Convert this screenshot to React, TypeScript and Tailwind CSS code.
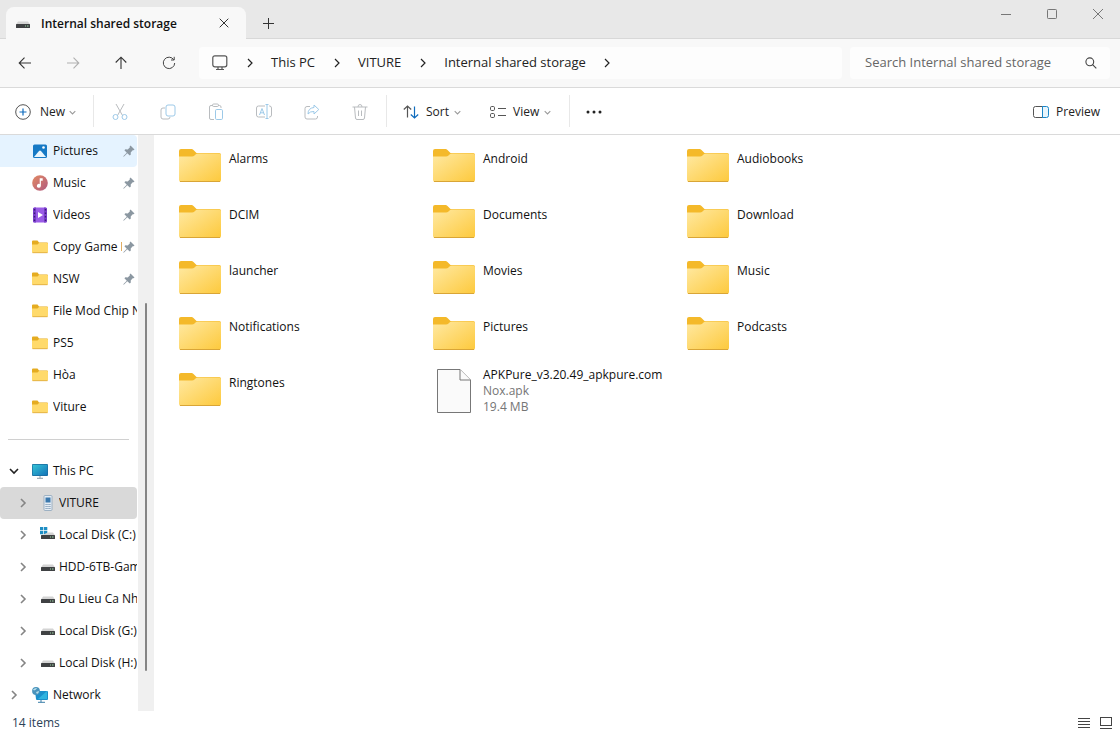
import React from 'react';

type IconName = 'pictures' | 'music' | 'videos' | 'folder' | 'pc' | 'phone' | 'system' | 'drive' | 'network';

interface NavItem {
    label: string;
    icon: IconName;
    pinned?: boolean;
    state?: 'hover' | 'selected';
}

const quickAccess: NavItem[] = [
    { label: 'Pictures', icon: 'pictures', pinned: true, state: 'hover' },
    { label: 'Music', icon: 'music', pinned: true },
    { label: 'Videos', icon: 'videos', pinned: true },
    { label: 'Copy Game N', icon: 'folder', pinned: true },
    { label: 'NSW', icon: 'folder', pinned: true },
    { label: 'File Mod Chip N', icon: 'folder' },
    { label: 'PS5', icon: 'folder' },
    { label: 'Hòa', icon: 'folder' },
    { label: 'Viture', icon: 'folder' },
];

const drives: NavItem[] = [
    { label: 'VITURE', icon: 'phone', state: 'selected' },
    { label: 'Local Disk (C:)', icon: 'system' },
    { label: 'HDD-6TB-Gam', icon: 'drive' },
    { label: 'Du Lieu Ca Nh', icon: 'drive' },
    { label: 'Local Disk (G:)', icon: 'drive' },
    { label: 'Local Disk (H:)', icon: 'drive' },
];

const folders = [
    'Alarms', 'Android', 'Audiobooks',
    'DCIM', 'Documents', 'Download',
    'launcher', 'Movies', 'Music',
    'Notifications', 'Pictures', 'Podcasts',
    'Ringtones',
];

const crumbs = ['This PC', 'VITURE', 'Internal shared storage'];

const Chevron: React.FC<{ className?: string; down?: boolean; size?: number; width?: number }> = ({ className, down, size = 10, width = 1.2 }) => (
    <svg width={size} height={size} viewBox="0 0 10 10" fill="none" stroke="currentColor" strokeWidth={width} className={className}>
        <path d={down ? 'M1 3l4 4 4-4' : 'M3 1l4 4-4 4'} />
    </svg>
);

const DriveIcon = () => (
    <svg width="16" height="16" viewBox="0 0 16 16">
        <path d="M3 5.500h10l2 3H1z" fill="#d4d4d4" />
        <rect x="1" y="8" width="14" height="4" rx=".5" fill="#3f4143" />
        <path d="M10 10h1M12 10h1.500" stroke="#9ad6a4" />
    </svg>
);

const SmallIcon: React.FC<{ name: IconName }> = ({ name }) => {
    switch (name) {
        case 'pictures':
            return (
                <svg width="16" height="16" viewBox="0 0 16 16">
                    <rect x="1" y="1.500" width="14" height="13.500" rx="1.500" fill="#1679c5" />
                    <path d="M2 14l5-6q1-1 2 0l5 6z" fill="#eaf6fd" />
                    <circle cx="11.500" cy="4.500" r="1.300" fill="#fff" />
                </svg>
            );
        case 'music':
            return (
                <svg width="16" height="16" viewBox="0 0 16 16">
                    <defs>
                        <linearGradient id="music" x1="0" y1="0" x2="1" y2="1">
                            <stop offset="0" stopColor="#e38a63" />
                            <stop offset="1" stopColor="#b05a80" />
                        </linearGradient>
                    </defs>
                    <circle cx="8" cy="8" r="7.800" fill="url(#music)" />
                    <path d="M7.700 3.300h3v2.400H8.900v5.100a2 2 0 1 1-1.200-1.900z" fill="#fff" />
                </svg>
            );
        case 'videos':
            return (
                <svg width="16" height="16" viewBox="0 0 16 16">
                    <rect x="1" y=".5" width="14" height="15" rx="1.500" fill="#9a5ce6" />
                    <path d="M1 2a1.500 1.500 0 0 1 1.500-1.500H4v15H2.500A1.500 1.500 0 0 1 1 14zM12 .5h1.500A1.500 1.500 0 0 1 15 2v12a1.500 1.500 0 0 1-1.500 1.500H12z" fill="#7a3fcb" />
                    <path d="M2.500 2v12M13.500 2v12" stroke="#3d1a78" strokeWidth="1.400" strokeDasharray="1.500 2" />
                    <path d="M6 5l5 3-5 3z" fill="#fff" />
                </svg>
            );
        case 'folder':
            return (
                <svg width="16" height="16" viewBox="0 0 16 16">
                    <path d="M0 2.500q0-1 1-1h4.500l1.500 2h8q1 0 1 1V7H0z" fill="#e5ac21" />
                    <path d="M0 5.500h5.500l1.500-1.500h8q1 0 1 1V13q0 1-1 1H1q-1 0-1-1z" fill="#ffda6b" />
                    <path d="M.5 13.700h15" stroke="#dca73c" strokeWidth=".8" />
                </svg>
            );
        case 'pc':
            return (
                <svg width="16" height="16" viewBox="0 0 16 16">
                    <defs>
                        <linearGradient id="screen" x1="0" y1="0" x2="1" y2="1">
                            <stop offset="0" stopColor="#35c4d6" />
                            <stop offset="1" stopColor="#1473b8" />
                        </linearGradient>
                    </defs>
                    <rect x="0" y="1" width="16" height="12" rx="1" fill="#1a6c9e" />
                    <rect x=".7" y="1.700" width="14.600" height="10.600" rx=".5" fill="url(#screen)" />
                    <path d="M8 13v2M5 15.300h6" stroke="#8c9aa5" />
                </svg>
            );
        case 'phone':
            return (
                <svg width="16" height="16" viewBox="0 0 16 16">
                    <rect x="4" y=".5" width="8" height="15" rx="1" fill="#e4ecf4" stroke="#8da5ba" strokeWidth=".8" />
                    <rect x="5.500" y="2.500" width="5" height="5" fill="#3a78ad" />
                    <path d="M5.500 9.500h5M5.500 11.500h5M5.500 13.500h5" stroke="#7795b0" strokeDasharray="1.200 .7" />
                </svg>
            );
        case 'system':
            return (
                <svg width="16" height="16" viewBox="0 0 16 16">
                    <path d="M0 0h3.300v3.300H0zM4 0h3.300v3.300H4zM0 4h3.300v3.300H0zM4 4h3.300v3.300H4z" fill="#1f8ec4" />
                    <path d="M8 5.500h5l2 3H1z" fill="#d4d4d4" />
                    <rect x="1" y="8" width="14" height="4" rx=".5" fill="#3f4143" />
                    <path d="M10 10h1M12 10h1.500" stroke="#9ad6a4" />
                </svg>
            );
        case 'network':
            return (
                <svg width="16" height="16" viewBox="0 0 16 16">
                    <path d="M3 4h12q1 0 1 1v7q0 1-1 1H5q-1 0-1-1z" fill="#1c8fcb" />
                    <path d="M6 12l9-8v8z" fill="#30b3df" />
                    <path d="M9 13v2.300M6 15.300h7" stroke="#3b7fa8" />
                    <circle cx="4" cy="4" r="3.900" fill="#4a94bd" />
                    <path d="M1 2.500q2-2 4-1.500-1 2-3 2.500zM4 5l3-1q0 2-2 3z" fill="#b9dfe9" />
                </svg>
            );
        default:
            return <DriveIcon />;
    }
};

const Pin = () => (
    <svg width="12" height="12" viewBox="0 0 12 12">
        <path d="M7.500.5L11.500 4.500l-1 .8-.8-.1-2 2.200.1 2.200-1 1L4.300 8.200 1 11.500.3 11.700.5 11 3.800 7.700 1.400 5.300l1-1 2.300.1 2.100-2-.1-.9z" fill="#8b97a1" />
    </svg>
);

const LargeFolder = () => (
    <svg width="42" height="34" viewBox="0 0 42 34" className="shrink-0">
        <defs>
            <linearGradient id="folder" x1="0" y1="0" x2="1" y2="1">
                <stop offset="0" stopColor="#ffe9a2" />
                <stop offset="1" stopColor="#fdc93c" />
            </linearGradient>
        </defs>
        <path d="M0 2q0-2 2-2h10.500q1 0 2 1l3 3H40q2 0 2 2v8H0z" fill="#f4b92a" />
        <path d="M0 7.500h13q1.500 0 2.500-1l1-1q1-1 2.500-1H40q2 0 2 2V31q0 2-2 2H2q-2 0-2-2z" fill="url(#folder)" />
        <path d="M1 32.500h40" fill="none" stroke="#d9a536" />
    </svg>
);

const NavRow: React.FC<{ item: NavItem; nested?: boolean }> = ({ item, nested }) => (
    <li className={`flex h-8 items-center rounded-r-sm ${item.state === 'hover' ? 'bg-[#e5f3ff]' : item.state === 'selected' ? 'rounded-l-sm bg-[#d9d9d9]' : ''}`}>
        {nested && (
            <button type="button" aria-label={`Expand ${item.label}`} className="flex w-10 shrink-0 justify-center pl-[6px] text-[#858585]">
                <Chevron width={1.6} />
            </button>
        )}
        <a href="#" className={`flex min-w-0 flex-1 items-center ${nested ? 'gap-[3px]' : 'gap-[5px] pl-8'}`}>
            <span className="shrink-0"><SmallIcon name={item.icon} /></span>
            <span className="min-w-0 flex-1 overflow-hidden whitespace-nowrap">{item.label}</span>
            {item.pinned && <span className="-ml-1 mr-[2px] shrink-0"><Pin /></span>}
        </a>
    </li>
);

const NavRoot: React.FC<{ label: string; icon: IconName; open?: boolean }> = ({ label, icon, open }) => (
    <div className="flex h-8 items-center">
        <button type="button" aria-label={`Toggle ${label}`} className={`flex w-8 shrink-0 justify-center pr-1 ${open ? 'text-[#222]' : 'text-[#858585]'}`}>
            <Chevron down={open} width={1.6} />
        </button>
        <a href="#" className="flex items-center gap-[5px]">
            <SmallIcon name={icon} />
            {label}
        </a>
    </div>
);

const ToolButton: React.FC<{ label: string; children: React.ReactNode }> = ({ label, children }) => (
    <button type="button" aria-label={label} disabled className="flex h-8 w-12 items-center justify-center pt-[2px]">
        <svg width="18" height="18" viewBox="0 0 18 18" fill="none" stroke="#b9bcbf">{children}</svg>
    </button>
);

const Divider = () => <div className="h-8 w-px bg-[#e8e8e8]" />;

const TitleBar = () => (
    <header className="flex h-[39px] bg-[#e8e8e8]">
        <div className="flex flex-1 items-end border-b border-[#d8d8d8] pl-[6px]">
            <div className="-mb-px flex h-8 w-60 items-center rounded-t-lg bg-[#f8f8f8] pl-[9px] pr-2 pt-[2px]">
                <DriveIcon />
                <span className="ml-[10px] flex-1 whitespace-nowrap font-semibold">Internal shared storage</span>
                <button type="button" aria-label="Close tab" className="flex h-6 w-7 items-center justify-center pb-[2px] text-[#333]">
                    <svg width="10" height="10" viewBox="0 0 10 10" stroke="currentColor"><path d="M.7.7l8.600 8.600M9.300.7L.7 9.300" /></svg>
                </button>
            </div>
            <button type="button" aria-label="New tab" className="flex h-8 w-11 items-center justify-center pt-[2px] text-[#333]">
                <svg width="11" height="11" viewBox="0 0 11 11" stroke="currentColor"><path d="M5.500 0v11M0 5.500h11" /></svg>
            </button>
            <div className="ml-auto flex self-start text-[#777]">
                <button type="button" aria-label="Minimize" className="flex h-7 w-[46px] items-center justify-center pl-[2px]">
                    <svg width="10" height="10" viewBox="0 0 10 10" stroke="currentColor"><path d="M0 5.500h10" /></svg>
                </button>
                <button type="button" aria-label="Maximize" className="flex h-7 w-[46px] items-center justify-center pl-[2px]">
                    <svg width="10" height="10" viewBox="0 0 10 10" fill="none" stroke="currentColor"><rect x=".5" y=".5" width="9" height="9" rx=".8" /></svg>
                </button>
                <button type="button" aria-label="Close" className="flex h-7 w-[46px] items-center justify-center pl-[2px]">
                    <svg width="10" height="10" viewBox="0 0 10 10" stroke="currentColor"><path d="M0 0l10 10M10 0L0 10" /></svg>
                </button>
            </div>
        </div>
    </header>
);

const AddressBar = () => (
    <div className="flex h-[49px] items-center border-b border-[#dadada] bg-[#f8f8f8] pl-px pr-[10px] text-[13px] text-[#333]">
        <button type="button" aria-label="Back" className="flex w-12 justify-center">
            <svg width="14" height="14" viewBox="0 0 14 14" fill="none" stroke="#333" strokeWidth="1.100"><path d="M13 7H1.200M6.500 1.700L1.200 7l5.300 5.300" /></svg>
        </button>
        <button type="button" aria-label="Forward" disabled className="flex w-12 justify-center">
            <svg width="14" height="14" viewBox="0 0 14 14" fill="none" stroke="#b0b0b0" strokeWidth="1.100"><path d="M1 7h11.800M7.500 1.700L12.800 7l-5.300 5.300" /></svg>
        </button>
        <button type="button" aria-label="Up" className="flex w-12 justify-center">
            <svg width="14" height="14" viewBox="0 0 14 14" fill="none" stroke="#333" strokeWidth="1.100"><path d="M7 13V1.200M1.700 6.500L7 1.200l5.300 5.300" /></svg>
        </button>
        <button type="button" aria-label="Refresh" className="flex w-12 justify-center">
            <svg width="14" height="14" viewBox="0 0 14 14" fill="none" stroke="#444"><path d="M11.800 3.800A5.700 5.700 0 1 0 12.700 7M12.200.8v3.200H9" /></svg>
        </button>
        <nav aria-label="Path" className="ml-[6px] flex h-8 flex-1 items-center rounded bg-[#fdfdfd] pl-[13px] text-[#222]">
            <svg width="16" height="16" viewBox="0 0 16 16" fill="none" stroke="#555" strokeWidth="1.200">
                <rect x=".8" y=".8" width="14" height="11" rx="2" />
                <path d="M6 12v2.500M10 12v2.500M4 14.500h8" />
            </svg>
            {crumbs.map(crumb => (
                <React.Fragment key={crumb}>
                    <span className="flex w-[43px] justify-center"><Chevron /></span>
                    <a href="#" className="whitespace-nowrap">{crumb}</a>
                </React.Fragment>
            ))}
            <span className="flex w-[43px] justify-center"><Chevron /></span>
        </nav>
        <label className="ml-2 flex h-8 w-[260px] items-center rounded bg-[#fdfdfd] pl-[15px] pr-[13px]">
            <input type="text" aria-label="Search" placeholder="Search Internal shared storage" className="min-w-0 flex-1 bg-transparent outline-none placeholder:text-[#666]" />
            <svg width="12" height="12" viewBox="0 0 12 12" fill="none" stroke="#444" strokeWidth="1.100"><circle cx="4.800" cy="4.800" r="3.900" /><path d="M7.600 7.600l3.700 3.700" /></svg>
        </label>
    </div>
);

const Toolbar = () => (
    <div className="flex h-[47px] items-center border-b border-[#dadada] bg-white text-[#222]">
        <button type="button" className="flex w-[93px] items-center pl-[15px] pt-[2px]">
            <svg width="16" height="16" viewBox="0 0 16 16" fill="none"><circle cx="8" cy="8" r="7.300" stroke="#555" /><path d="M8 4.500v7M4.500 8h7" stroke="#0f6cbd" strokeWidth="1.200" /></svg>
            <span className="ml-[9px]">New</span>
            <Chevron down size={7} className="ml-1 text-[#999]" width={1.5} />
        </button>
        <Divider />
        <div className="mx-[2px] flex">
            <ToolButton label="Cut">
                <path d="M5 1l6.500 11.500M13 1L6.500 12.500" />
                <g stroke="#9cc9e8"><circle cx="4.500" cy="14" r="2.500" /><circle cx="13.500" cy="14" r="2.500" /></g>
            </ToolButton>
            <ToolButton label="Copy">
                <path d="M6 5H4Q2 5 2 7v7q0 2 2 2h5q2 0 2-2" />
                <rect x="7" y="2" width="9" height="11" rx="2" stroke="#9cc9e8" />
            </ToolButton>
            <ToolButton label="Paste">
                <path d="M6 2.500H4Q2.500 2.500 2.500 4v11q0 1.500 1.500 1.500h3M11 2.500h1.500Q14 2.500 14 4v1" />
                <rect x="5.500" y="1" width="6" height="2.500" rx="1.200" />
                <rect x="8.500" y="6.500" width="7" height="10" rx="1.200" stroke="#9cc9e8" />
            </ToolButton>
            <ToolButton label="Rename">
                <path d="M10 3H3.500Q1.500 3 1.500 5v7q0 2 2 2H10M14 3h.5q2 0 2 2v7q0 2-2 2H14" />
                <path d="M4.500 12L7 5.500 9.500 12M5.300 9.800h3.400M12 1.500v14M10.500 1.500h3M10.500 15.500h3" stroke="#9cc9e8" />
            </ToolButton>
            <ToolButton label="Share">
                <path d="M7 3.500H4q-2 0-2 2V14q0 2 2 2h8.500q2 0 2-2v-1" />
                <path d="M11 2l4.800 4.500L11 11V8.500q-4-.3-6 2.500 0-6 6-6.500z" stroke="#9cc9e8" strokeLinejoin="round" />
            </ToolButton>
            <ToolButton label="Delete">
                <path d="M1.500 4h15M7 4q0-2.500 2-2.500T11 4M3.500 4l1 11q.2 1.500 1.500 1.500h6q1.300 0 1.500-1.500l1-11M7.500 7.500v5.500M10.500 7.500v5.500" />
            </ToolButton>
        </div>
        <Divider />
        <button type="button" className="flex w-[87px] items-center pl-4 pt-[2px]">
            <svg width="16" height="14" viewBox="0 0 16 14" fill="none" strokeWidth="1.200"><path d="M4.500 12.500V1M.8 4.500L4.500 1l3.700 3.500" stroke="#555" /><path d="M11.500 1.500V13M7.800 9.500l3.700 3.500 3.700-3.500" stroke="#0f6cbd" /></svg>
            <span className="ml-[7px]">Sort</span>
            <Chevron down size={7} className="ml-[5px] text-[#999]" width={1.5} />
        </button>
        <button type="button" className="flex w-[95px] items-center pl-4 pt-[2px]">
            <svg width="16" height="14" viewBox="0 0 16 14" fill="none" stroke="#555"><rect x=".5" y="1.500" width="4" height="4" rx="1.200" /><rect x=".5" y="8.500" width="4" height="4" rx="1.200" /><path d="M8 3.500h8M8 10.500h8" /></svg>
            <span className="ml-[7px]">View</span>
            <Chevron down size={7} className="ml-[5px] text-[#999]" width={1.5} />
        </button>
        <Divider />
        <button type="button" aria-label="See more" className="flex w-12 justify-center pt-[2px]">
            <svg width="16" height="4" viewBox="0 0 16 4" fill="#222"><circle cx="2" cy="2" r="1.500" /><circle cx="8" cy="2" r="1.500" /><circle cx="14" cy="2" r="1.500" /></svg>
        </button>
        <button type="button" className="ml-auto flex items-center gap-[7px] pr-5 pt-[2px]">
            <svg width="16" height="12" viewBox="0 0 16 12" fill="none"><path d="M10 .5H2.500Q.5.500.5 2.500v7q0 2 2 2H10" stroke="#555" /><path d="M9.500.5h4q2 0 2 2v7q0 2-2 2h-4z" stroke="#1a86c8" fill="#e8f5fc" /></svg>
            Preview
        </button>
    </div>
);

const Sidebar = () => (
    <aside className="flex shrink-0">
        <div className="w-[137px]">
            <ul>
                {quickAccess.map(item => <NavRow key={item.label} item={item} />)}
            </ul>
            <div className="flex h-8 items-center px-2">
                <hr className="w-full border-[#d0d0d0]" />
            </div>
            <NavRoot label="This PC" icon="pc" open />
            <ul>
                {drives.map(item => <NavRow key={item.label} item={item} nested />)}
            </ul>
            <NavRoot label="Network" icon="network" />
        </div>
        <div className="ml-px flex w-4 justify-center bg-[#f0f0f0] pb-10 pt-[168px]">
            <div className="w-[2px] rounded-full bg-[#858585]" />
        </div>
    </aside>
);

const FileList = () => (
    <main className="flex-1 pl-[25px] pt-[3px]">
        <ul className="grid grid-cols-[repeat(auto-fill,254px)] [&>li:last-child]:col-start-2">
            {folders.map(name => (
                <li key={name}>
                    <button type="button" className="flex h-14 w-full items-center gap-2 text-left">
                        <LargeFolder />
                        <span className="pb-[14px] leading-4">{name}</span>
                    </button>
                </li>
            ))}
            <li>
                <button type="button" className="flex h-14 w-full items-center gap-2 pt-[2px] text-left">
                    <span className="flex w-[42px] shrink-0 justify-center">
                        <svg width="34" height="44" viewBox="0 0 34 44" fill="#fafafa" stroke="#777">
                            <path d="M.5.500H23L33.500 11v32.500H.5z" />
                            <path d="M23 .5V11h10.500" />
                        </svg>
                    </span>
                    <span className="whitespace-nowrap leading-4">
                        APKPure_v3.20.49_apkpure.com
                        <span className="block text-[#757575]">Nox.apk</span>
                        <span className="block text-[#757575]">19.4 MB</span>
                    </span>
                </button>
            </li>
        </ul>
    </main>
);

const StatusBar = () => (
    <footer className="flex h-5 items-center bg-white pl-3 pr-2 pt-[3px] text-[#2b4258]">
        <span>14 items</span>
        <div className="ml-auto flex gap-[10px]">
            <button type="button" aria-label="Details view">
                <svg width="12" height="12" viewBox="0 0 12 12" stroke="#444"><path d="M0 1.500h12M0 4.500h12M0 7.500h12M0 10.500h12" /></svg>
            </button>
            <button type="button" aria-label="Large icons view">
                <svg width="12" height="12" viewBox="0 0 12 12" fill="none" stroke="#444"><rect x=".5" y=".5" width="11" height="8" /><path d="M0 11.500h12" /></svg>
            </button>
        </div>
    </footer>
);

const App = () => (
    <div className="flex min-h-screen flex-col bg-white font-['Segoe_UI','Open_Sans','Noto_Sans',sans-serif] text-xs text-[#111]">
        <TitleBar />
        <AddressBar />
        <Toolbar />
        <div className="flex flex-1">
            <Sidebar />
            <FileList />
        </div>
        <StatusBar />
    </div>
);

export default App;
